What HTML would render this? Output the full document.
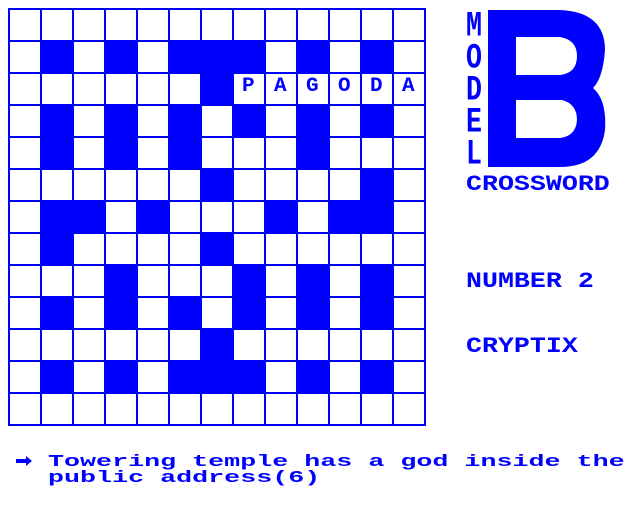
<!DOCTYPE html>
<html><head><style>
body{margin:0;background:#fff;width:640px;height:512px;overflow:hidden;position:relative;font-family:"Liberation Mono",monospace;font-weight:bold;color:#0000ff}
.t{position:absolute;white-space:pre;transform-origin:0 0;line-height:1}
</style></head><body>
<svg width="640" height="512" style="position:absolute;left:0;top:0">
<g fill="#0000ff" id="cells"></g>
<g stroke="#0000ff" stroke-width="2" id="lines"></g>
<path fill="#0000ff" fill-rule="evenodd" d="M488,10 L560,10 Q605,12 605,50 Q603,78 593,88 Q607,100 605,130 Q600,167 560,167 L488,167 Z M516,37 L560,37 Q577,40 577,56 Q577,73 560,75 L516,75 Z M516,100 L562,100 Q577,104 577,120 Q576,136 560,138 L516,138 Z"/>
<path fill="#0000ff" d="M16,459 h10 v-3 l6,5 -6,5 v-3 h-10z"/>
</svg>
<div id="pg"></div>
<div class="t" style="left:466px;top:174px;font-size:22px;transform:scaleX(1.21)">CROSSWORD</div>
<div class="t" style="left:466px;top:271px;font-size:22px;transform:scaleX(1.21)">NUMBER 2</div>
<div class="t" style="left:466px;top:336px;font-size:22px;transform:scaleX(1.21)">CRYPTIX</div>
<div class="t" style="left:48px;top:454px;font-size:17px;transform:scaleX(1.57)">Towering temple has a god inside the</div>
<div class="t" style="left:48px;top:470px;font-size:17px;transform:scaleX(1.57)">public address(6)</div>
<script>
var blue={1:[1,3,5,6,7,9,11],2:[6],3:[1,3,5,7,9,11],4:[1,3,5,9],5:[6,11],6:[1,2,4,8,10,11],7:[1,6],8:[3,7,9,11],9:[1,3,5,7,9,11],10:[6],11:[1,3,5,6,7,9,11]};
var c='',l='';
for(var r in blue)blue[r].forEach(function(k){c+='<rect x="'+(9+32*k)+'" y="'+(9+32*r)+'" width="32" height="32"/>';});
for(var i=0;i<=13;i++){var p=9+32*i;l+='<line x1="'+p+'" y1="8" x2="'+p+'" y2="426"/><line x1="8" y1="'+p+'" x2="426" y2="'+p+'"/>';}
document.getElementById('cells').innerHTML=c;document.getElementById('lines').innerHTML=l;
var s='',w='PAGODA';
for(var j=0;j<6;j++)s+='<div class="t" style="left:'+(9+32*(7+j)+9)+'px;top:77px;font-size:20px;transform:scaleX(1.05)">'+w[j]+'</div>';
var m='MODEL';
for(var j=0;j<5;j++)s+='<div class="t" style="left:466px;top:'+(10+32*j)+'px;font-size:22px;transform:scale(1.21,1.6)">'+m[j]+'</div>';
document.getElementById('pg').innerHTML=s;
</script>
</body></html>
